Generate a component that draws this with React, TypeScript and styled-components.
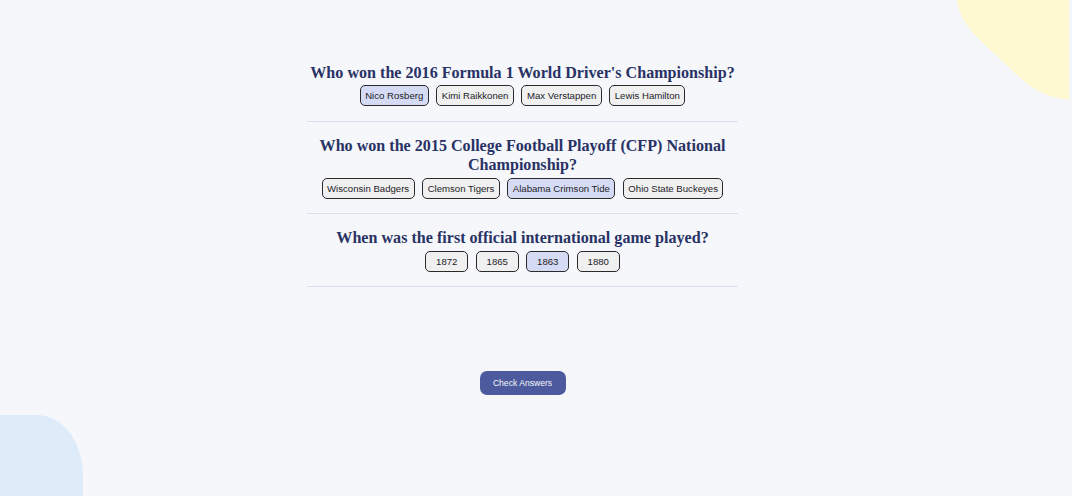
import React from "react";
import styled, { createGlobalStyle } from "styled-components";

const GlobalStyle = createGlobalStyle`
  html, body {
    margin: 0;
    padding: 0;
    background: #F5F7FB;
  }
  body {
    font-family: "Liberation Sans", Arial, sans-serif;
  }
`;

const Page = styled.div`
  position: relative;
  width: 1072px;
  height: 496px;
  overflow: hidden;
  background: #F5F7FB;
  display: flex;
  justify-content: center;
  padding-right: 27px;
  box-sizing: border-box;
`;

const BlobTop = styled.svg`
  position: absolute;
  top: 0;
  left: 940px;
`;

const BlobBottom = styled.svg`
  position: absolute;
  left: 0;
  bottom: 0;
`;

const Main = styled.main`
  position: relative;
  z-index: 1;
  width: 431px;
  padding-top: 49px;
  display: flex;
  flex-direction: column;
  align-items: center;
`;

const QuizList = styled.div`
  width: 100%;
  display: flex;
  flex-direction: column;
`;

const QuestionBlock = styled.section`
  padding: 14px 0 14.5px;
  border-bottom: 1px solid #DBDEF0;
  display: flex;
  flex-direction: column;
  align-items: center;
`;

const Question = styled.h2`
  margin: 0;
  font-family: "Liberation Serif", "Times New Roman", serif;
  font-weight: 700;
  font-size: 16.1px;
  line-height: 19.4px;
  color: #293264;
  text-align: center;
`;

const Answers = styled.div`
  margin-top: 3px;
  display: flex;
  justify-content: center;
  gap: 7.5px;
`;

const Answer = styled.button<{ $selected?: boolean }>`
  min-width: 43px;
  height: 21px;
  padding: 0 4.5px;
  box-sizing: border-box;
  border: 1px solid #2a2a2a;
  border-radius: 5px;
  background: ${(p) => (p.$selected ? "#D6DBF5" : "#F0F0F0")};
  color: #1c1c28;
  font-family: "Liberation Sans", Arial, sans-serif;
  font-size: 9.6px;
  line-height: 11px;
  cursor: pointer;
`;

const CheckButton = styled.button`
  margin-top: 84px;
  width: 86px;
  height: 24px;
  border: none;
  border-radius: 7px;
  background: #4D5B9E;
  color: #F5F7FB;
  font-family: "Liberation Sans", Arial, sans-serif;
  font-size: 8.6px;
  cursor: pointer;
`;

const questions = [
  {
    q: "Who won the 2016 Formula 1 World Driver's Championship?",
    answers: ["Nico Rosberg", "Kimi Raikkonen", "Max Verstappen", "Lewis Hamilton"],
    selected: 0,
  },
  {
    q: "Who won the 2015 College Football Playoff (CFP) National Championship?",
    answers: ["Wisconsin Badgers", "Clemson Tigers", "Alabama Crimson Tide", "Ohio State Buckeyes"],
    selected: 2,
  },
  {
    q: "When was the first official international game played?",
    answers: ["1872", "1865", "1863", "1880"],
    selected: 2,
  },
];

export default function App() {
  return (
    <>
      <GlobalStyle />
      <Page>
        <BlobTop width="132" height="110" viewBox="0 0 132 110">
          <path
            d="M17 0 C 18 14, 28 30, 46 46 L 72 70 C 88 86, 104 98, 129 99.5 L 129 0 Z"
            fill="#FFFAD1"
          />
        </BlobTop>
        <BlobBottom width="90" height="82" viewBox="0 0 90 82">
          <path
            d="M0 1 L 36 1 C 64 1, 83 28, 83 64 L 83 82 L 0 82 Z"
            fill="#DEEBF8"
          />
        </BlobBottom>
        <Main>
          <QuizList>
            {questions.map((item, i) => (
              <QuestionBlock key={i}>
                <Question>{item.q}</Question>
                <Answers>
                  {item.answers.map((a, j) => (
                    <Answer key={j} $selected={j === item.selected}>
                      {a}
                    </Answer>
                  ))}
                </Answers>
              </QuestionBlock>
            ))}
          </QuizList>
          <CheckButton>Check Answers</CheckButton>
        </Main>
      </Page>
    </>
  );
}
